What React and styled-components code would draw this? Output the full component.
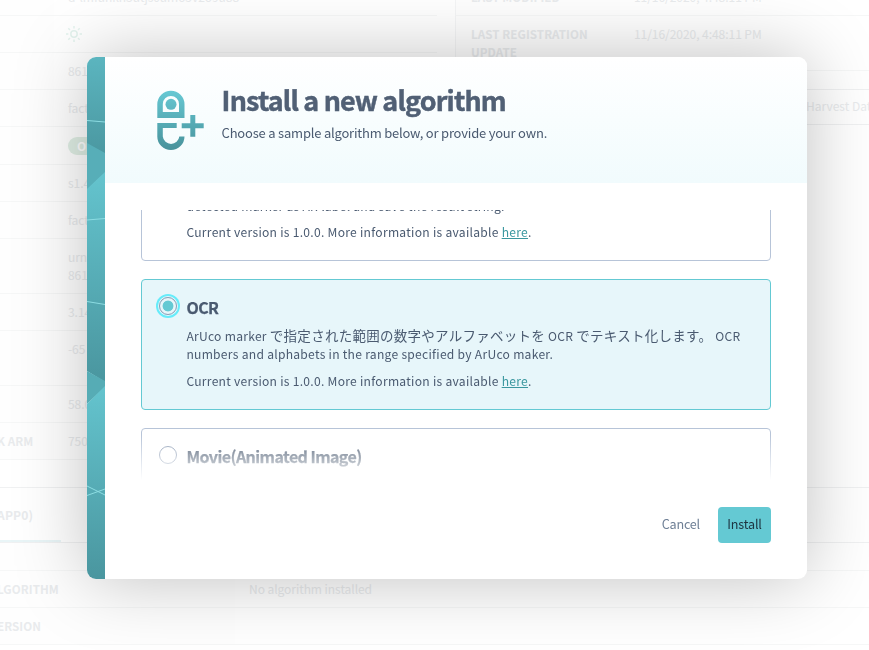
import React from "react";
import styled, { createGlobalStyle, css } from "styled-components";

const Global = createGlobalStyle`
  * { box-sizing: border-box; }
  html, body { margin: 0; background: #fff; overflow: hidden; }
  body {
    font-family: "Noto Sans CJK JP", sans-serif;
    font-size: 12px;
    color: #4a5a70;
  }
`;

const Page = styled.main`
  width: 869px;
  height: 650px;
  overflow: hidden;
  color: #e9ebed;
  background: #fff;
  line-height: 18px;
`;
const Details = styled.div`
  display: flex;
  gap: 18px;
  height: 481px;
  margin-top: -21px;
`;
const Table = styled.div`
  width: ${(p) => p.$w}px;
  display: grid;
  grid-template-columns: ${(p) => p.$label}px 1fr;
  grid-template-rows: ${(p) => p.$rows};
  align-content: start;
  ${(p) => p.$edge && css`border-left: 1px solid #f4f5f6;`}
`;
const Cell = styled.div`
  padding: 8.5px 0 0 14px;
  white-space: nowrap;
  letter-spacing: -0.05px;
  border-bottom: 1px solid #f6f7f7;
`;
const Label = styled(Cell)`
  padding-left: ${(p) => p.$pad ?? 0}px;
  text-indent: ${(p) => (p.$pad ? 0 : -3)}px;
  font-weight: 700;
  font-size: 11.6px;
  letter-spacing: 0.08px;
  background: #fefefe;
`;
const RightColumn = styled.div`
  width: 414px;
  display: flex;
  flex-direction: column;
`;
const Selector = styled.div`
  height: 36px;
  margin: 18px -30px 0 0;
  padding: 0 0 2px 350px;
  display: flex;
  align-items: center;
  white-space: nowrap;
  border: 1px solid #f0f1f2;
`;
const OnBadge = styled.span`
  display: inline-block;
  height: 18px;
  margin-top: 1px;
  padding: 0 9px;
  border-radius: 9px;
  background: #e0efe5;
  color: #fff;
  font-weight: 700;
`;
const Tabs = styled.div`
  height: 56px;
  margin-top: 27px;
  display: flex;
  border-top: 1px solid #f0f1f2;
  border-bottom: 1px solid #f0f1f2;
`;
const Tab = styled.div`
  width: 61px;
  padding-top: 18px;
  text-indent: -3px;
  white-space: nowrap;
  font-weight: 700;
  letter-spacing: 0.2px;
  border-bottom: 2px solid #e9f5f7;
`;

const Overlay = styled.div`
  position: fixed;
  inset: 0;
  display: flex;
  padding: 57px 62px 71px 87px;
`;
const Dialog = styled.section`
  display: flex;
  width: 720px;
  height: 522px;
  border-radius: 9px;
  background: #fff;
  box-shadow: 0 0 72px rgba(0, 0, 0, 0.25);
  overflow: hidden;
`;
const Ribbon = styled.svg`
  flex: none;
  display: block;
  width: 18px;
  height: 522px;
`;
const Content = styled.div`
  flex: 1;
  min-width: 0;
  display: flex;
  flex-direction: column;
`;
const Header = styled.header`
  height: 126px;
  padding: 27px 0 0 45px;
  display: flex;
  background: linear-gradient(#fff, #f1fbfd);
`;
const Logo = styled.svg`
  flex: none;
  width: 60px;
  height: 72px;
  margin-right: 11.6px;
`;
const Title = styled.h1`
  margin: -1px 0 0;
  font-size: 26.9px;
  line-height: 34px;
  font-weight: 700;
  letter-spacing: -0.84px;
  -webkit-text-stroke: 0.45px #516075;
  color: #516075;
  white-space: nowrap;
`;
const Subtitle = styled.p`
  margin: 7px 0 0;
  font-size: 13px;
  line-height: 18px;
  letter-spacing: -0.21px;
  white-space: nowrap;
`;
const List = styled.div`
  height: 270px;
  margin: 27px 36px 0;
  overflow: hidden;
  display: flex;
  flex-direction: column;
  justify-content: flex-start;
  gap: 18px;
  mask-image: linear-gradient(#000 calc(100% - 45px), transparent);
`;
const Card = styled.article`
  flex: none;
  height: 131px;
  padding: 17px;
  display: flex;
  gap: 9.4px;
  border: 1px solid ${(p) => (p.$selected ? "#64c9d3" : "#b7c4d8")};
  border-radius: 4px;
  background: ${(p) => (p.$selected ? "#e7f6fa" : "#fff")};
  &:first-child { margin-top: -80px; }
`;
const Radio = styled.span`
  flex: none;
  width: 18px;
  height: 18px;
  border: 1px solid #8c9cb4;
  border-radius: 50%;
  ${(p) => p.$selected && css`
    background: radial-gradient(circle at 50% 50%, #64c9d3 5px, #e7f6fa 5.8px);
    box-shadow: 0 0 0 1px #e7f6fa, 0 0 0 3px #66ecfa;
  `}
`;
const Body = styled.div`
  min-width: 0;
  margin-top: -1px;
`;
const Name = styled.h2`
  margin: 0 0 9px;
  font-size: 16px;
  line-height: 22px;
  font-weight: 700;
  letter-spacing: -0.57px;
  -webkit-text-stroke: 0.25px currentColor;
`;
const Text = styled.p`
  margin: 0 0 9px;
  font-size: 12.1px;
  line-height: 18px;
  letter-spacing: 0.27px;
  white-space: nowrap;
`;
const LowText = styled(Text)`
  margin: 10px 0 8px;
`;
const Japanese = styled.span`
  font-size: 13.5px;
  line-height: 1;
`;
const Link = styled.a`
  color: #3a979f;
  text-decoration: underline;
  text-underline-offset: 1px;
`;
const Footer = styled.footer`
  margin: 27px 36px 0;
  display: flex;
  justify-content: flex-end;
`;
const Button = styled.button`
  height: 36px;
  padding: 0 9px 3px;
  border: 0;
  border-radius: 4px;
  font: 400 12.6px "Noto Sans CJK JP", sans-serif;
  letter-spacing: -0.2px;
  color: ${(p) => (p.$primary ? "#1d3440" : "#6e7f95")};
  background: ${(p) => (p.$primary ? "#64c9d3" : "transparent")};
  ${(p) => p.$primary && css`width: 53px; margin-left: 9px;`}
`;
const SunIcon = styled.svg`
  display: block;
  width: 18px;
  height: 18px;
  margin-left: -3px;
`;

const Sun = () => (
  <SunIcon viewBox="0 0 18 18" fill="none" stroke="#e4f3ee" strokeWidth="1.5">
    <circle cx="9" cy="9" r="3.2" />
    <path d="M9 1v2.4M9 14.600v2.4M1 9h2.400M14.600 9H17M3.300 3.300 5 5M13 13l1.700 1.700M3.300 14.700 5 13M13 5l1.700-1.700" />
  </SunIcon>
);

const left = [
  ["", "d-lmfuhkn3utjs0umo5v2o9u88"],
  ["", <Sun key="sun" />],
  ["", "861"],
  ["", "fact"],
  ["", <OnBadge key="on">ON</OnBadge>],
  ["", "s1.4"],
  ["", "fact"],
  ["", <span key="urn">urn:<br />861</span>],
  ["", "3.14"],
  ["", "-65"],
  ["", "58.0"],
  ["K ARM", "750"],
];

const Version = () => (
  <Text>
    Current version is 1.0.0. More information is available <Link>here</Link>.
  </Text>
);

export default function App() {
  return (
    <>
      <Global />
      <Page>
        <Details>
          <Table $w={437} $label={54} $rows="37px 37px 37px 37px 38px 37px 37px 55px 37px 55px 37px 37px">
            {left.map(([label, value], i) => (
              <React.Fragment key={i}>
                <Label>{label}</Label>
                <Cell>{value}</Cell>
              </React.Fragment>
            ))}
          </Table>
          <RightColumn>
            <Table $w={414} $label={164} $rows="37px 55px" $edge>
              <Label $pad={15}>LAST MODIFIED</Label>
              <Cell>11/16/2020, 4:48:11 PM</Cell>
              <Label $pad={15}>LAST REGISTRATION<br />UPDATE</Label>
              <Cell>11/16/2020, 4:48:11 PM</Cell>
            </Table>
            <Selector>Harvest Data</Selector>
          </RightColumn>
        </Details>
        <Tabs><Tab>APP0)</Tab></Tabs>
        <Table $w={869} $label={235} $rows="28px 37px 37px">
          <Label /><Cell />
          <Label>LGORITHM</Label><Cell>No algorithm installed</Cell>
          <Label>ERSION</Label><Cell />
        </Table>
      </Page>
      <Overlay>
        <Dialog>
          <Ribbon viewBox="0 0 18 522">
            <defs>
              <linearGradient id="shadeTop" x1="0" y1="0" x2="0" y2="1">
                <stop offset="0" stopColor="#5bb5bf" />
                <stop offset="1" stopColor="#4b98a1" />
              </linearGradient>
              <linearGradient id="shade" x1="0" y1="0" x2="0" y2="1">
                <stop offset="0" stopColor="#64c4ce" />
                <stop offset="1" stopColor="#4a969f" />
              </linearGradient>
            </defs>
            <path d="M0 0h18v97L0 87z" fill="url(#shadeTop)" />
            <path d="M0 86 18 96v20L0 133z" fill="#57aeb8" />
            <path d="M0 132 18 115v210L0 314z" fill="url(#shade)" />
            <path d="M0 314 18 324v6L0 347z" fill="#56acb5" />
            <path d="M0 347 18 329v193H0z" fill="url(#shade)" />
            <path d="M0 63.500 18 65M0 163l18-1.500M0 244.500 18 247.500M0 429l18 9M0 438.500 18 432" stroke="#8cdce2" fill="none" />
          </Ribbon>
          <Content>
            <Header>
              <Logo viewBox="0 0 60 72">
                <defs>
                  <linearGradient id="mark" gradientUnits="userSpaceOnUse" x1="0" y1="6" x2="0" y2="66">
                    <stop offset="0" stopColor="#67c9d4" />
                    <stop offset="1" stopColor="#48929b" />
                  </linearGradient>
                </defs>
                <g fill="url(#mark)">
                  <path fillRule="evenodd" d="M7.300 34V20.300a13.600 13.600 0 0 1 27.200 0V34zM12.800 28h16.200v-8a8.100 8.100 0 0 0-16.200 0z" />
                  <circle cx="21" cy="20.300" r="5.500" />
                  <path d="M7.300 39h19.400v5H12.800v8.500a8.300 8.300 0 0 0 16.500 0h5.200a13.600 13.600 0 0 1-27.200 0z" />
                  <path d="M40.300 31h5v8.300h8.400v5h-8.400v8.400h-5v-8.400h-8.600v-5h8.600z" />
                </g>
              </Logo>
              <div>
                <Title>Install a new algorithm</Title>
                <Subtitle>Choose a sample algorithm below, or provide your own.</Subtitle>
              </div>
            </Header>
            <List>
              <Card>
                <Radio />
                <Body>
                  <Name>ArUco</Name>
                  <LowText>ArUco marker<br />detected marker as AR label and save the result string.</LowText>
                  <Version />
                </Body>
              </Card>
              <Card $selected>
                <Radio $selected />
                <Body>
                  <Name>OCR</Name>
                  <Text>
                    ArUco marker <Japanese>で指定された範囲の数字やアルファベットを</Japanese> OCR{" "}
                    <Japanese>でテキスト化します。</Japanese> OCR<br />
                    numbers and alphabets in the range specified by ArUco maker.
                  </Text>
                  <Version />
                </Body>
              </Card>
              <Card>
                <Radio />
                <Body><Name>Movie(Animated Image)</Name></Body>
              </Card>
            </List>
            <Footer>
              <Button>Cancel</Button>
              <Button $primary>Install</Button>
            </Footer>
          </Content>
        </Dialog>
      </Overlay>
    </>
  );
}
